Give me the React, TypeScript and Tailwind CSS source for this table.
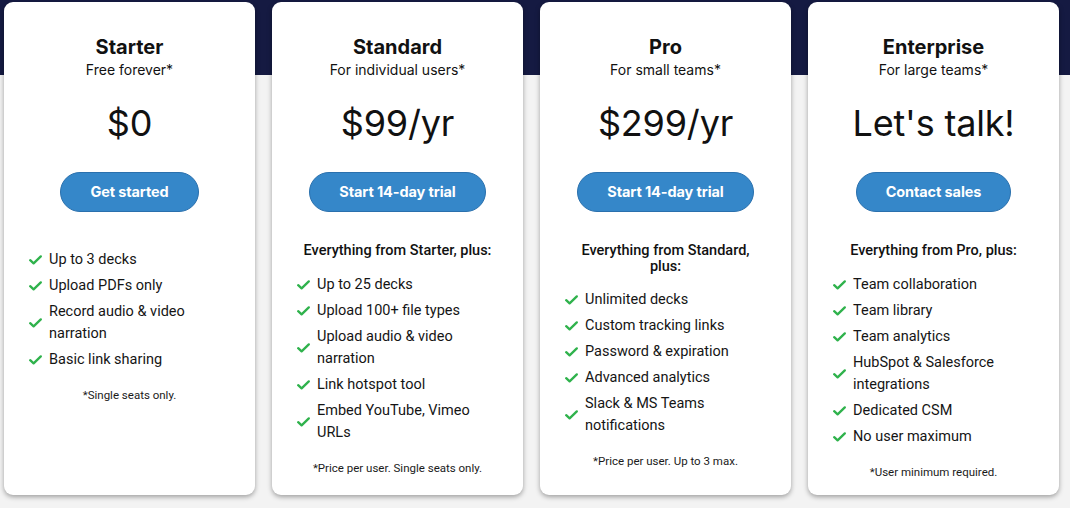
import { Fragment } from 'react';

type Plan = {
  name: string;
  sub: string;
  price: string;
  cta: string;
  heading?: string[];
  items: string[][];
  note: string;
};

const PLANS: Plan[] = [
  {
    name: 'Starter',
    sub: 'Free forever*',
    price: '$0',
    cta: 'Get started',
    items: [['Up to 3 decks'], ['Upload PDFs only'], ['Record audio & video', 'narration'], ['Basic link sharing']],
    note: '*Single seats only.',
  },
  {
    name: 'Standard',
    sub: 'For individual users*',
    price: '$99/yr',
    cta: 'Start 14-day trial',
    heading: ['Everything from Starter, plus:'],
    items: [
      ['Up to 25 decks'],
      ['Upload 100+ file types'],
      ['Upload audio & video', 'narration'],
      ['Link hotspot tool'],
      ['Embed YouTube, Vimeo', 'URLs'],
    ],
    note: '*Price per user. Single seats only.',
  },
  {
    name: 'Pro',
    sub: 'For small teams*',
    price: '$299/yr',
    cta: 'Start 14-day trial',
    heading: ['Everything from Standard,', 'plus:'],
    items: [
      ['Unlimited decks'],
      ['Custom tracking links'],
      ['Password & expiration'],
      ['Advanced analytics'],
      ['Slack & MS Teams', 'notifications'],
    ],
    note: '*Price per user. Up to 3 max.',
  },
  {
    name: 'Enterprise',
    sub: 'For large teams*',
    price: "Let's talk!",
    cta: 'Contact sales',
    heading: ['Everything from Pro, plus:'],
    items: [
      ['Team collaboration'],
      ['Team library'],
      ['Team analytics'],
      ['HubSpot & Salesforce', 'integrations'],
      ['Dedicated CSM'],
      ['No user maximum'],
    ],
    note: '*User minimum required.',
  },
];

function Check() {
  return (
    <svg width="13" height="10" viewBox="0 0 13 10" className="shrink-0">
      <path d="M1.2 5.2 L4.6 8.4 L11.8 1.4" fill="none" stroke="#2fb24c" strokeWidth="2.3" strokeLinecap="round" strokeLinejoin="round" />
    </svg>
  );
}

function PlanCard({ plan }: { plan: Plan }) {
  return (
    <div className="w-[251px] h-[493px] bg-white rounded-[9px] shadow-[0_2px_5px_rgba(0,0,0,0.35)] flex flex-col items-center pt-[33px] text-[#111]">
      <h2 className="font-['Inter',sans-serif] font-bold text-[20px] leading-[24px]">{plan.name}</h2>
      <p className="mt-[2px] font-['Inter',sans-serif] text-[14px] leading-[18px]">{plan.sub}</p>
      <p className="mt-[22px] font-['Inter',sans-serif] text-[36px] leading-[44px] tracking-[-0.2px]">{plan.price}</p>
      <button className="mt-[27px] h-[40px] px-[29px] rounded-full bg-[#3587c9] border border-[#2a70ad] text-white font-['Inter',sans-serif] font-bold text-[14.5px] tracking-[-0.1px] whitespace-nowrap">
        {plan.cta}
      </button>

      {plan.heading ? (
        <p className="mt-[31px] text-center font-['Roboto',sans-serif] font-medium text-[14.5px] leading-[15.5px] whitespace-nowrap">
          {plan.heading.map((l, i) => (
            <Fragment key={i}>
              {i > 0 && <br />}
              {l}
            </Fragment>
          ))}
        </p>
      ) : null}

      <ul className={`${plan.heading ? 'mt-[15px]' : 'mt-[37px]'} self-stretch px-[25px] flex flex-col gap-[4px]`}>
        {plan.items.map((lines, i) => (
          <li key={i} className="flex items-center gap-[7px]">
            <Check />
            <span className="font-['Roboto',sans-serif] text-[14.5px] leading-[22px] text-[#151515] whitespace-nowrap">
              {lines.map((l, j) => (
                <Fragment key={j}>
                  {j > 0 && <br />}
                  {l}
                </Fragment>
              ))}
            </span>
          </li>
        ))}
      </ul>

      <p className="mt-[17px] font-['Roboto',sans-serif] text-[11.5px] leading-[14px] text-[#1a1a1a]">{plan.note}</p>
    </div>
  );
}

export default function App() {
  return (
    <div className="w-[1070px] h-[508px] overflow-hidden bg-[linear-gradient(to_bottom,#151a42_0px,#151a42_75px,#f3f3f3_75px,#f3f3f3_100%)]">
      <div className="flex gap-[17px] pl-[4px] pt-[2px]">
        {PLANS.map(p => (
          <PlanCard key={p.name} plan={p} />
        ))}
      </div>
    </div>
  );
}
